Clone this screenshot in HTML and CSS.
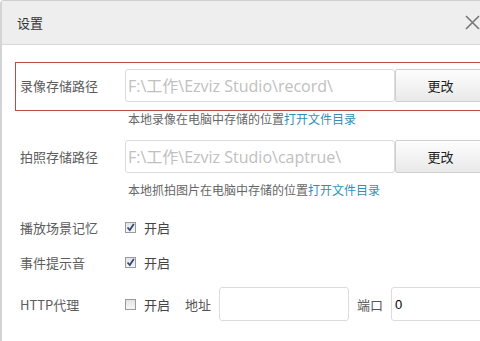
FILE: index.html
```html
<!DOCTYPE html>
<html lang="zh-CN">
<head>
  <meta charset="UTF-8">
  <meta name="viewport" content="width=device-width, initial-scale=1.0" />
  <title>设置</title>
  <link rel="stylesheet" href="styles.css">
</head>
<body>
  <div class="dialog">
    <div class="dialog-header">
      <span class="dialog-title">设置</span>
      <svg class="close-btn" width="15" height="15" viewBox="0 0 15 15">
        <path d="M1 1 L14 14 M14 1 L1 14" stroke="#777" stroke-width="1.6" fill="none"/>
      </svg>
    </div>

    <div class="dialog-body">
      <div class="path-row active">
        <label class="field-label">录像存储路径</label>
        <input class="path-input" type="text" placeholder="F:\工作\Ezviz Studio\record\">
        <button class="change-btn">更改</button>
      </div>
      <p class="hint">本地录像在电脑中存储的位置<a href="#">打开文件目录</a></p>

      <div class="path-row">
        <label class="field-label">拍照存储路径</label>
        <input class="path-input" type="text" placeholder="F:\工作\Ezviz Studio\captrue\">
        <button class="change-btn">更改</button>
      </div>
      <p class="hint">本地抓拍图片在电脑中存储的位置<a href="#">打开文件目录</a></p>

      <div class="option-row first">
        <label class="field-label">播放场景记忆</label>
        <span class="check on"><svg width="9" height="9" viewBox="0 0 9 9"><path d="M1.5 4.5 L3.8 7 L7.8 1" stroke="#34477a" stroke-width="1.8" fill="none"/></svg></span>
        <span class="check-text">开启</span>
      </div>

      <div class="option-row">
        <label class="field-label">事件提示音</label>
        <span class="check on"><svg width="9" height="9" viewBox="0 0 9 9"><path d="M1.5 4.5 L3.8 7 L7.8 1" stroke="#34477a" stroke-width="1.8" fill="none"/></svg></span>
        <span class="check-text">开启</span>
      </div>

      <div class="option-row proxy">
        <label class="field-label">HTTP代理</label>
        <span class="check"></span>
        <span class="check-text">开启</span>
        <span class="sub-label">地址</span>
        <input class="addr-input" type="text">
        <span class="sub-label">端口</span>
        <input class="port-input" type="text" value="0">
      </div>
    </div>
  </div>
</body>
</html>
```

FILE: styles.css
```css
body {
  margin: 0;
  font-family: "Noto Sans CJK SC", "Noto Sans", sans-serif;
  background-color: #ffffff;
  overflow: hidden;
}
.dialog {
  width: 480px;
  height: 341px;
  border-left: 2px solid #d4d4d4;
  border-top: 1px solid #cfcfcf;
  border-top-left-radius: 4px;
  box-sizing: border-box;
  overflow: hidden;
}
.dialog-header {
  height: 43px;
  background-color: #eeeeee;
  border-bottom: 1px solid #d8d8d8;
  display: flex;
  align-items: center;
  justify-content: space-between;
  padding: 0 0 0 15px;
}
.dialog-title { font-size: 13px; color: #333; }
.close-btn { margin-right: 0; }

.dialog-body { padding-top: 17px; }

.path-row {
  display: flex; align-items: center;
  margin-left: 13px;
  padding: 6px 0 8px 4px;
  border: 1px solid transparent;
  border-right: none;
  white-space: nowrap;
}
.path-row.active { border-color: #c1474c; }
.field-label {
  width: 105px; flex-shrink: 0;
  font-size: 13px; color: #5c5c5c;
  white-space: nowrap;
}
.path-input {
  width: 270px; height: 33px; flex-shrink: 0;
  box-sizing: border-box;
  border: 1px solid #dcdcdc; border-radius: 3px;
  padding: 0 0 0 2px;
  font-family: "Open Sans", "Noto Sans CJK SC", sans-serif;
  font-size: 16px;
  outline: none;
}
.path-input::placeholder { color: #c0c0c0; }
.change-btn {
  width: 90px; height: 33px; flex-shrink: 0;
  border: 1px solid #cfcfcf; border-radius: 2px;
  background: linear-gradient(#fdfdfd, #e9e9e9);
  font-family: inherit; font-size: 13px; color: #222;
  padding: 0 0 0 1px;
}
.hint {
  margin: 0 0 7px 126px;
  height: 15px; line-height: 15px;
  font-size: 12px; color: #666;
  white-space: nowrap;
}
.hint a { color: #2f8fba; text-decoration: none; }

.option-row {
  display: flex; align-items: center;
  height: 30px;
  margin: 5px 0 0 18px;
  white-space: nowrap;
}
.option-row.first { margin-top: 15px; }
.option-row.proxy { height: 34px; margin-top: 10px; }
.check {
  width: 11px; height: 11px; flex-shrink: 0;
  box-sizing: border-box;
  border: 1px solid #9a9a9a;
  background: linear-gradient(#e4e4e4, #f6f6f6);
  display: flex; align-items: center; justify-content: center;
}
.check-text { font-size: 13px; color: #444; margin-left: 8px; flex-shrink: 0; }
.sub-label { font-size: 13px; color: #555; margin: 0 8px 0 15px; flex-shrink: 0; }
.addr-input, .port-input {
  height: 34px; box-sizing: border-box; flex-shrink: 0;
  border: 1px solid #dcdcdc; border-radius: 3px;
  outline: none;
  font-family: "Liberation Sans", sans-serif; font-size: 13px; color: #000;
  padding: 0 3px;
}
.addr-input { width: 130px; margin-right: -7px; }
.port-input { width: 100px; }
```
